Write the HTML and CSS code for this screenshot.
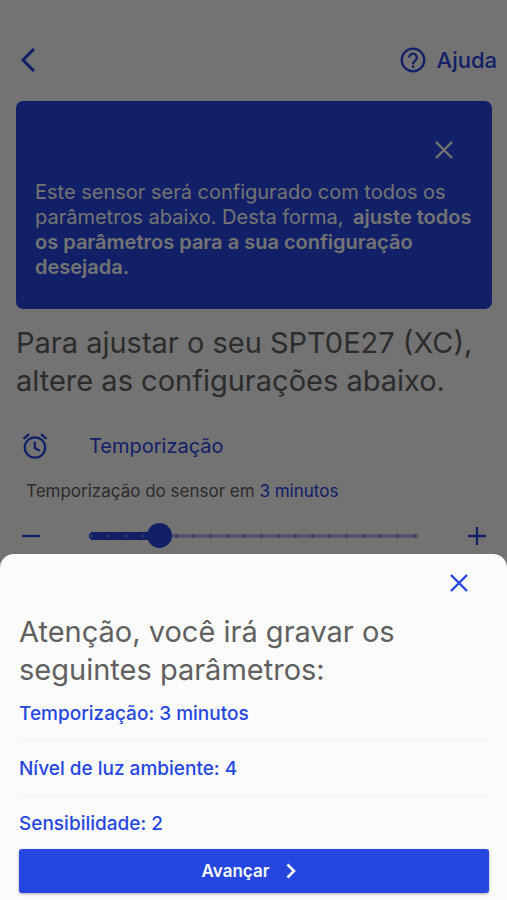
FILE: index.html
```html
<!DOCTYPE html>
<html lang="pt-BR">
<head>
<meta charset="utf-8">
<meta name="viewport" content="width=device-width, initial-scale=1">
<title>Ajuste do sensor</title>
<link rel="stylesheet" href="styles.css">
</head>
<body>
<div class="page">
  <header class="topbar">
    <button class="icon-button" type="button" aria-label="Voltar">
      <svg width="16" height="24" viewBox="0 0 16 24" fill="none" stroke="currentColor" stroke-width="3"><path d="M14 1 3 12l11 11"/></svg>
    </button>
    <a class="help" href="#ajuda">
      <svg width="26" height="26" viewBox="0 0 26 26" fill="none" stroke="currentColor" stroke-width="2.3"><circle cx="13" cy="13" r="11.3"/><path d="M9.2 10.5a3.8 3.8 0 1 1 6.5 2.7c-1.400 1.300-2.700 1.900-2.700 4"/><path d="M13 18.400v2.500"/></svg>
      <span>Ajuda</span>
    </a>
  </header>

  <main>
    <section class="notice">
      <button class="icon-button notice-close" type="button" aria-label="Fechar aviso">
        <svg width="18" height="18" viewBox="0 0 18 18" fill="none" stroke="currentColor" stroke-width="2.400"><path d="m1 1 16 16M17 1 1 17"/></svg>
      </button>
      <p>Este sensor será configurado com todos os parâmetros abaixo. Desta forma, <strong>ajuste todos os parâmetros para a sua configuração desejada.</strong></p>
    </section>

    <h1 class="title">Para ajustar o seu SPT0E27 (XC), altere as configurações abaixo.</h1>

    <section class="setting">
      <h2 class="setting-name">
        <svg width="26" height="26" viewBox="0 0 26 26" fill="none" stroke="currentColor" stroke-width="2.300"><circle cx="13" cy="14.500" r="10.200"/><path d="M12.800 8.500v6.400l4.800 2.900M1.500 5.900 7 1.200M24.500 5.900 19 1.200"/></svg>
        <span>Temporização</span>
      </h2>
      <label class="setting-value" for="timer">Temporização do sensor em <b>3 minutos</b></label>
      <div class="slider-row">
        <button class="icon-button" type="button" aria-label="Diminuir">
          <svg width="18" height="18" viewBox="0 0 18 18" fill="none" stroke="currentColor" stroke-width="2.300"><path d="M0 9h18"/></svg>
        </button>
        <input class="slider" id="timer" type="range" min="0" max="19" value="4">
        <button class="icon-button" type="button" aria-label="Aumentar">
          <svg width="18" height="18" viewBox="0 0 18 18" fill="none" stroke="currentColor" stroke-width="2.300"><path d="M0 9h18M9 0v18"/></svg>
        </button>
      </div>
    </section>
  </main>
</div>

<div class="scrim">
  <section class="sheet" role="dialog" aria-modal="true" aria-labelledby="sheet-title">
    <button class="icon-button sheet-close" type="button" aria-label="Fechar">
      <svg width="18" height="18" viewBox="0 0 18 18" fill="none" stroke="currentColor" stroke-width="2.400"><path d="m1 1 16 16M17 1 1 17"/></svg>
    </button>
    <h2 class="title" id="sheet-title">Atenção, você irá gravar os seguintes parâmetros:</h2>
    <ul class="params">
      <li>Temporização: 3 minutos</li>
      <li>Nível de luz ambiente: 4</li>
      <li>Sensibilidade: 2</li>
    </ul>
    <button class="next" type="button">
      <span>Avançar</span>
      <svg width="10" height="16" viewBox="0 0 10 16" fill="none" stroke="currentColor" stroke-width="2.600"><path d="m1.500 1.500 6.500 6.500-6.500 6.500"/></svg>
    </button>
  </section>
</div>
</body>
</html>
```
FILE: styles.css
```css
:root {
  --blue: #2646e0;
  --surface: #fbfbfb;
  --text: #606060;
}

* {
  box-sizing: border-box;
}

body {
  margin: 0;
  background: var(--surface);
  color: var(--text);
  font-family: Inter, "Open Sans", sans-serif;
}

h1, h2, p, ul {
  margin: 0;
  padding: 0;
  font-weight: 400;
}

svg {
  display: block;
  flex: none;
}

.icon-button {
  display: block;
  padding: 0;
  border: 0;
  background: none;
  color: var(--blue);
}

.page {
  padding: 40px 15px 0 16px;
}

.topbar {
  display: flex;
  align-items: center;
  justify-content: space-between;
  height: 40px;
  margin-right: -5px;
  padding-left: 4px;
}

.help {
  display: flex;
  align-items: center;
  gap: 11px;
  color: var(--blue);
  font-size: 22px;
  font-weight: 500;
  text-decoration: none;
}

.notice {
  margin-top: 21px;
  padding: 40px 12px 29px 19px;
  border-radius: 7px;
  background: var(--blue);
  color: var(--surface);
  font-size: 20px;
  line-height: 25px;
}

.notice-close {
  margin: 0 27px 21px auto;
  color: var(--surface);
}

.notice strong {
  margin-left: 4px;
  font-weight: 600;
}

.title {
  font-size: 29px;
  line-height: 38px;
}

.page .title {
  margin-top: 15px;
}

.setting-name {
  display: flex;
  align-items: center;
  gap: 41px;
  margin-top: 33px;
  padding-left: 6px;
  color: var(--blue);
  font-size: 20px;
  line-height: 26px;
}

.setting-value {
  display: block;
  margin-top: 22px;
  padding-left: 10px;
  font-size: 17px;
  line-height: 20px;
}

.setting-value b {
  color: var(--blue);
  font-weight: 400;
}

.slider-row {
  display: flex;
  align-items: center;
  justify-content: space-between;
  margin-top: 22px;
  padding: 0 6px;
}

.slider {
  flex: 1;
  min-width: 0;
  height: 26px;
  margin: 0 39px 0 38px;
  padding: 0 11px;
  appearance: none;
  background:
    radial-gradient(circle, #7d84cc 1px, transparent 2px) -6px 50% / 17px 6px repeat-x content-box,
    linear-gradient(90deg, transparent 4px, var(--blue) 4px, var(--blue) 80px, transparent 80px) 50% / 100% 8px no-repeat content-box,
    radial-gradient(circle at 4px 50%, var(--blue) 4px, transparent 4px) 50% / 100% 8px no-repeat content-box,
    linear-gradient(90deg, transparent 4px, #b9b6ee 4px) 50% / 100% 4px no-repeat content-box;
}

.slider::-webkit-slider-runnable-track {
  height: 26px;
  margin: 0 -11px;
}

.slider::-webkit-slider-thumb {
  width: 25px;
  height: 25px;
  appearance: none;
  border-radius: 50%;
  background: var(--blue);
}

.scrim {
  position: fixed;
  inset: 0;
  display: flex;
  flex-direction: column;
  justify-content: flex-end;
  background: rgba(0, 0, 0, 0.54);
}

.sheet {
  padding: 20px 18px 7px 19px;
  border-radius: 14px 14px 0 0;
  background: var(--surface);
}

.sheet-close {
  margin: 0 21px 21px auto;
}

.params {
  list-style: none;
  color: var(--blue);
  font-size: 19px;
  font-weight: 500;
  line-height: 24px;
}

.params li {
  padding: 16px 0 14px;
}

.params li:first-child {
  padding-top: 13px;
}

.params li:last-child {
  padding-bottom: 13px;
}

.params li + li {
  border-top: 1px solid #f0f0f0;
}

.next {
  display: flex;
  align-items: center;
  justify-content: center;
  gap: 17px;
  width: 100%;
  height: 44px;
  padding: 0 10px 0 0;
  border: 0;
  border-radius: 3px;
  background: var(--blue);
  box-shadow: 0 1px 3px rgba(0, 0, 0, 0.35);
  color: var(--surface);
  font: 600 17px/24px Inter, "Open Sans", sans-serif;
}
```
